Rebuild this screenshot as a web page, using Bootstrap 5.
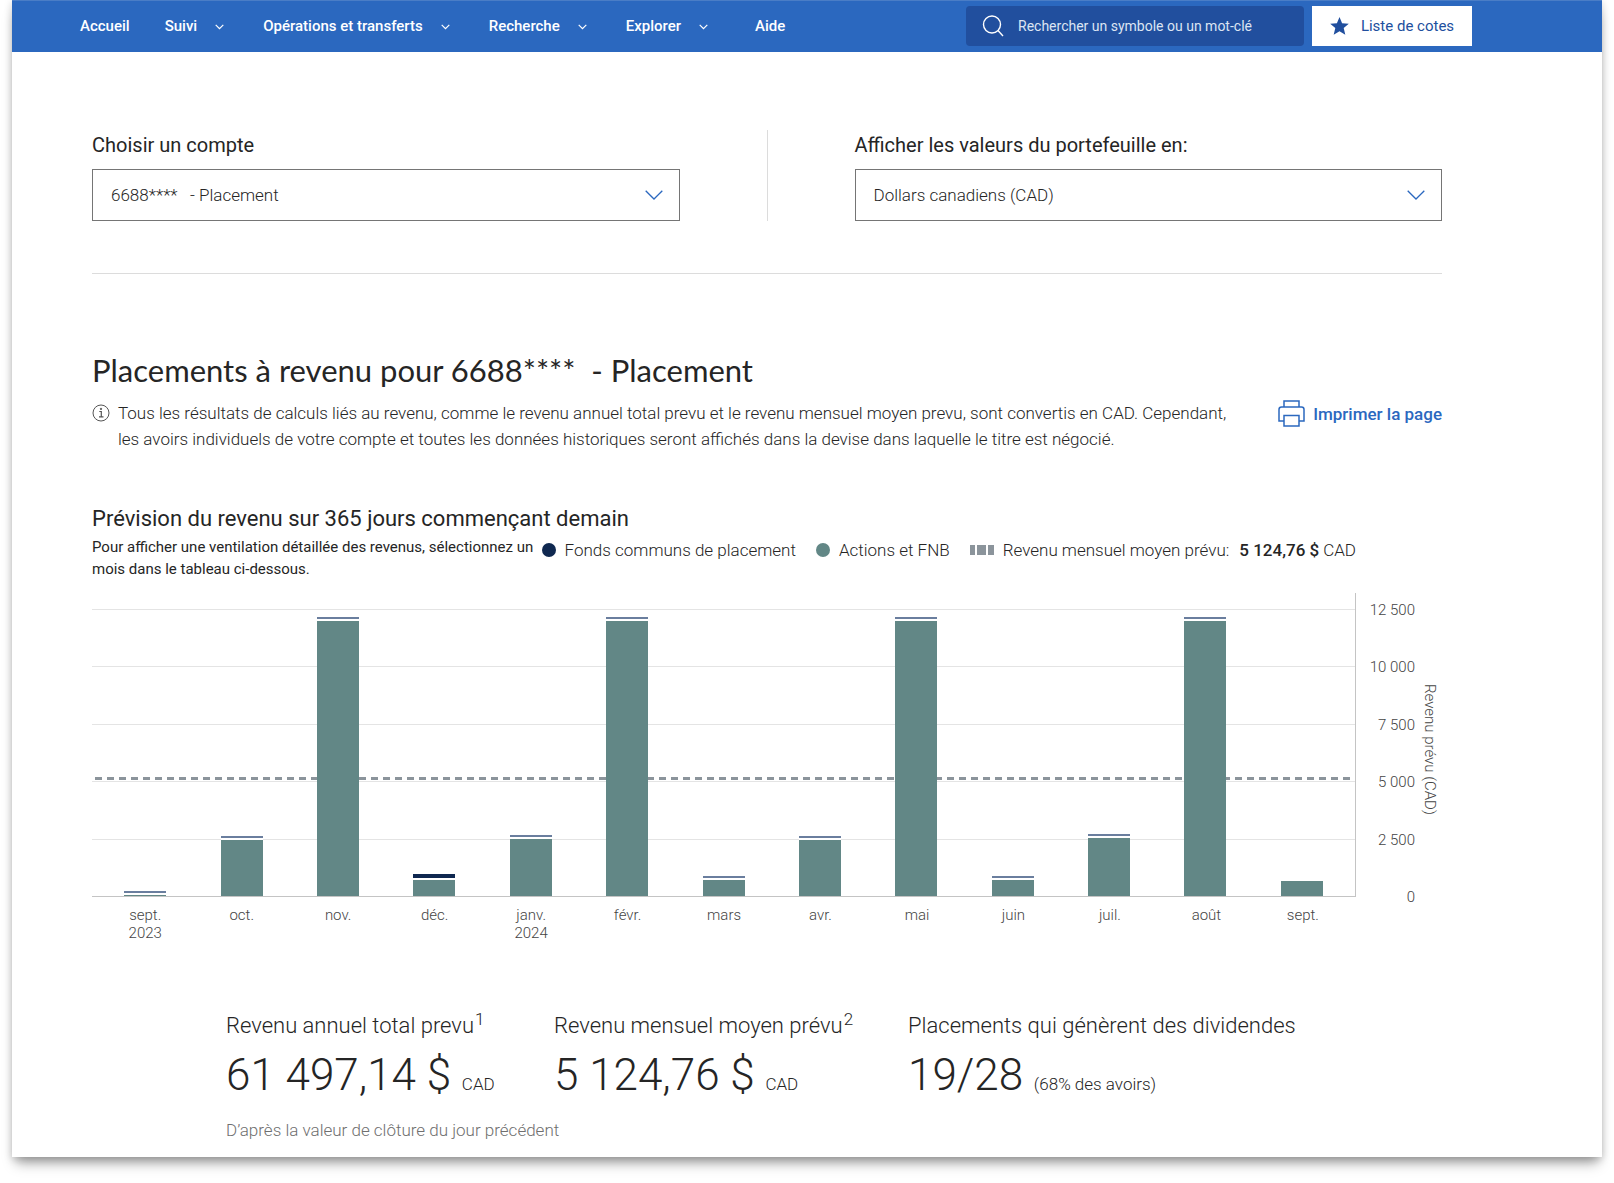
<!DOCTYPE html>
<html lang="fr">
<head>
<meta charset="utf-8">
<meta name="viewport" content="width=device-width, initial-scale=1">
<title>Placements à revenu</title>
<link href="https://cdn.jsdelivr.net/npm/bootstrap@5.3.0/dist/css/bootstrap.min.css" rel="stylesheet">
<style>
  body { font-family: Roboto, "Liberation Sans", sans-serif; color: #252525; background: #fff; font-size: 17px; line-height: 26px; }
  .sheet { margin: 0 12px 24px; padding-bottom: 14px; background: #fff; box-shadow: 0 10px 12px -4px rgba(0,0,0,.35), 0 2px 8px rgba(0,0,0,.18); }
  .topbar { background: #2b68bf; border-top: 1px solid #4a7dc6; height: 52px; padding: 0 130px 1px 68px; font-size: 15px; line-height: 20px; }
  .topbar .nav-link { color: #fff; padding: 0; font-weight: 500; white-space: nowrap; }
  .menu { gap: 35px; }
  .menu .caret { margin: 0 4px 0 18px; }
  .search { width: 338px; height: 40px; background: #214f9e; border-radius: 4px; padding: 0 16px; gap: 14px; }
  .search input { background: transparent; border: 0; outline: 0; color: #fff; font-size: 14px; padding: 0; min-width: 0; }
  .search input::placeholder { color: #dce5f3; opacity: 1; }
  .quotes { width: 160px; height: 40px; background: #fff; color: #214f9e; border: 0; border-radius: 0; font-size: 15px; padding: 0; gap: 12px; }
  .content { padding: 78px 160px 0 80px; }
  .pick label { font-size: 20px; line-height: 30px; font-weight: 400; margin-bottom: 9px; display: block; }
  .pick select { height: 52px; border: 1px solid #757575; border-radius: 0; padding: 2px 48px 0 18px; font-size: 17px; font-weight: 350; color: #252525;
    background-image: url("data:image/svg+xml,%3csvg xmlns='http://www.w3.org/2000/svg' viewBox='0 0 18 10'%3e%3cpath d='M.7.8 9 9 17.3.8' fill='none' stroke='%232b68bf' stroke-width='1.3'/%3e%3c/svg%3e"); background-size: 18px 10px; background-position: right 16px center; }
  .divider { width: 175px; }
  .divider .vr { background: #dcdcdc; opacity: 1; }
  .rule { border-top: 1px solid #dcdcdc; opacity: 1; margin: 52px 0 77px; color: inherit; }
  h1 { font-family: Lato, "Noto Sans", sans-serif; font-size: 31px; line-height: 38px; font-weight: 400; margin: 0 0 11px; }
  .info { font-weight: 350; gap: 8px; white-space: nowrap; }
  .info svg { margin-top: 4px; }
  .print { color: #2b68bf; font-weight: 500; text-decoration: none; gap: 8px; white-space: nowrap; }
  h2 { font-size: 22px; line-height: 30px; font-weight: 400; margin: 52px 0 2px; }
  .hint { font-size: 15px; line-height: 22px; width: 448px; margin: 0 0 13px; }
  .legend { font-weight: 350; margin-top: 1px; white-space: nowrap; padding-right: 86px; }
  .dot { width: 14px; height: 14px; border-radius: 50%; margin-right: 9px; }
  .entry { margin-left: 20px; }
  .average-name { margin-right: 10px; }
  .teal { background: #628786; }
  .dashkey { width: 24px; height: 10px; margin-right: 9px; background: linear-gradient(90deg,#8b949b 5px,transparent 5px 7px,#8b949b 7px 16px,transparent 16px 18px,#8b949b 18px); }
  .strong { font-weight: 500; }
  .plot { display: grid; height: 304px; border-right: 1px solid #c4c4c4; border-bottom: 1px solid #c4c4c4; }
  .plot > * { grid-area: 1 / 1; min-height: 0; }
  .lines { padding-top: 16px; }
  .lines div { border-top: 1px solid #e4e4e4; flex: 1 1 0; }
  .average { align-self: end; height: 3px; margin: 0 5px 116px 3px; background: repeating-linear-gradient(90deg,#8b949b 0 7px,transparent 7px 12px); }
  .bars, .months { padding: 0 5px; }
  .bars > div, .months > div { flex: 1 1 0; }
  .bars > div { display: flex; flex-direction: column; justify-content: flex-end; align-items: center; }
  .bars i { display: block; width: 42px; }
  .fund { background: #6a7e9e; border-bottom: 2px solid #fff; box-sizing: content-box; }
  .navy { background: #0f2850; }
  .months { font-size: 15px; font-weight: 300; line-height: 18px; color: #444; text-align: center; margin: 9px 0 0; height: 36px; }
  .scale { width: 59px; padding-top: 7px; font-size: 15px; font-weight: 300; line-height: 20px; color: #444; text-align: right; height: 314px; }
  .axisname { writing-mode: vertical-rl; font-size: 15px; font-weight: 300; line-height: 24px; color: #444; height: 313px; text-align: center; margin-left: 3px; }
  .stats { padding-left: 134px; margin-top: 69px; font-weight: 300; }
  .stats h3 { font-size: 22px; line-height: 30px; font-weight: 300; margin: 0; white-space: nowrap; }
  .stats sup { font-size: 17px; top: -8px; margin-left: 1px; line-height: 1; }
  .figure { font-size: 44px; line-height: 54px; margin-top: 7px; white-space: nowrap; }
  .figure span { font-size: 17px; font-weight: 350; }
  .stat1 { width: 328px; } .stat2 { width: 354px; }
  .note { color: #6f6f6f; font-size: 17px; font-weight: 350; margin: 6px 0 0; }
</style>
<script src="https://cdn.jsdelivr.net/npm/bootstrap@5.3.0/dist/js/bootstrap.bundle.min.js"></script>
</head>
<body>
<svg width="0" height="0" class="d-none"><symbol id="caret" viewBox="0 0 9 6"><path d="M.7.8 4.500 4.700 8.300.8" fill="none" stroke="#fff" stroke-width="1.200"/></symbol></svg>
<div class="sheet">
  <header class="topbar d-flex align-items-center justify-content-between">
    <nav class="d-flex align-items-center menu" aria-label="Navigation principale">
      <a class="nav-link" href="#">Accueil</a>
      <a class="nav-link" href="#">Suivi<svg class="caret" width="9" height="6"><use href="#caret"/></svg></a>
      <a class="nav-link" href="#">Opérations et transferts<svg class="caret" width="9" height="6"><use href="#caret"/></svg></a>
      <a class="nav-link" href="#">Recherche<svg class="caret" width="9" height="6"><use href="#caret"/></svg></a>
      <a class="nav-link" href="#">Explorer<svg class="caret" width="9" height="6"><use href="#caret"/></svg></a>
      <a class="nav-link ms-2" href="#">Aide</a>
    </nav>
    <div class="d-flex gap-2">
      <div class="search d-flex align-items-center">
        <svg class="flex-shrink-0" width="22" height="22" viewBox="0 0 22 22" fill="none" stroke="#fff" stroke-width="1.400"><circle cx="10" cy="9.500" r="8.500"/><path d="m16 15.500 5 5.500"/></svg>
        <input class="flex-grow-1" type="text" placeholder="Rechercher un symbole ou un mot-clé" aria-label="Rechercher un symbole ou un mot-clé">
      </div>
      <button class="quotes btn d-flex align-items-center justify-content-center" type="button">
        <svg width="19" height="18" viewBox="0 0 19 18"><path fill="#214f9e" d="m9.500 0 2.600 6.200 6.700.5-5.100 4.400 1.600 6.600-5.800-3.500-5.800 3.500 1.600-6.600L.2 6.700l6.700-.5z"/></svg>
        Liste de cotes
      </button>
    </div>
  </header>

  <main class="content">
    <div class="d-flex">
      <div class="pick flex-fill w-50">
        <label for="account">Choisir un compte</label>
        <select id="account" class="form-select"><option>6688**** &nbsp; - Placement</option></select>
      </div>
      <div class="divider flex-shrink-0 d-flex justify-content-center"><div class="vr"></div></div>
      <div class="pick flex-fill w-50">
        <label for="currency">Afficher les valeurs du portefeuille en:</label>
        <select id="currency" class="form-select"><option>Dollars canadiens (CAD)</option></select>
      </div>
    </div>
    <hr class="rule">

    <h1>Placements à revenu pour 6688**** &nbsp;- Placement</h1>
    <div class="d-flex justify-content-between">
      <div class="info d-flex">
        <svg class="flex-shrink-0" width="18" height="18" viewBox="0 0 18 18" fill="none" stroke="#555"><circle cx="9" cy="9" r="8"/><path d="M7.300 7.500h2v5M7 12.800h4.500" stroke-width="1.200"/><circle cx="9" cy="4.900" r=".7" fill="#555"/></svg>
        <div>Tous les résultats de calculs liés au revenu, comme le revenu annuel total prevu et le revenu mensuel moyen prevu, sont convertis en CAD. Cependant,<br>les avoirs individuels de votre compte et toutes les données historiques seront affichés dans la devise dans laquelle le titre est négocié.</div>
      </div>
      <a class="print d-flex align-items-center align-self-start" href="#">
        <svg width="27" height="27" viewBox="0 0 27 27" fill="none" stroke="#2b68bf" stroke-width="1.500"><path d="M6 7V1h15v6M6 21H1V9.500Q1 7 3.500 7h20Q26 7 26 9.500V21h-5"/><path d="M6 15.500h15V26H6z"/></svg>
        Imprimer la page
      </a>
    </div>

    <h2>Prévision du revenu sur 365 jours commençant demain</h2>
    <div class="d-flex justify-content-between align-items-start">
      <p class="hint">Pour afficher une ventilation détaillée des revenus, sélectionnez un mois dans le tableau ci-dessous.</p>
      <div class="legend d-flex align-items-center">
        <span class="dot navy"></span>Fonds communs de placement
        <span class="dot teal entry"></span>Actions et FNB
        <span class="dashkey entry"></span><span class="average-name">Revenu mensuel moyen prévu:</span><span class="strong me-1">5 124,76 $</span>CAD
      </div>
    </div>

    <div class="d-flex">
      <div class="flex-grow-1">
        <div class="plot">
          <div class="lines d-flex flex-column"><div></div><div></div><div></div><div></div><div></div></div>
          <div class="average"></div>
          <div class="bars d-flex">
            <div><i class="fund" style="height:2px"></i><i class="teal" style="height:1px"></i></div>
            <div><i class="fund" style="height:2px"></i><i class="teal" style="height:56px"></i></div>
            <div><i class="fund" style="height:2px"></i><i class="teal" style="height:275px"></i></div>
            <div><i class="fund navy" style="height:4px"></i><i class="teal" style="height:16px"></i></div>
            <div><i class="fund" style="height:2px"></i><i class="teal" style="height:57px"></i></div>
            <div><i class="fund" style="height:2px"></i><i class="teal" style="height:275px"></i></div>
            <div><i class="fund" style="height:2px"></i><i class="teal" style="height:16px"></i></div>
            <div><i class="fund" style="height:2px"></i><i class="teal" style="height:56px"></i></div>
            <div><i class="fund" style="height:2px"></i><i class="teal" style="height:275px"></i></div>
            <div><i class="fund" style="height:2px"></i><i class="teal" style="height:16px"></i></div>
            <div><i class="fund" style="height:2px"></i><i class="teal" style="height:58px"></i></div>
            <div><i class="fund" style="height:2px"></i><i class="teal" style="height:275px"></i></div>
            <div><i class="teal" style="height:15px"></i></div>
          </div>
        </div>
        <div class="months d-flex">
          <div>sept.<br>2023</div><div>oct.</div><div>nov.</div><div>déc.</div><div>janv.<br>2024</div><div>févr.</div><div>mars</div><div>avr.</div><div>mai</div><div>juin</div><div>juil.</div><div>août</div><div>sept.</div>
        </div>
      </div>
      <div class="scale d-flex flex-column justify-content-between">
        <div>12 500</div><div>10 000</div><div>7 500</div><div>5 000</div><div>2 500</div><div>0</div>
      </div>
      <div class="axisname">Revenu prévu (CAD)</div>
    </div>

    <section class="stats">
      <div class="d-flex">
        <div class="stat1"><h3>Revenu annuel total prevu<sup>1</sup></h3><div class="figure">61 497,14 $ <span>CAD</span></div></div>
        <div class="stat2"><h3>Revenu mensuel moyen prévu<sup>2</sup></h3><div class="figure">5 124,76 $ <span>CAD</span></div></div>
        <div><h3>Placements qui génèrent des dividendes</h3><div class="figure">19/28 <span>(68% des avoirs)</span></div></div>
      </div>
      <p class="note">D’après la valeur de clôture du jour précédent</p>
    </section>
  </main>
</div>
</body>
</html>
